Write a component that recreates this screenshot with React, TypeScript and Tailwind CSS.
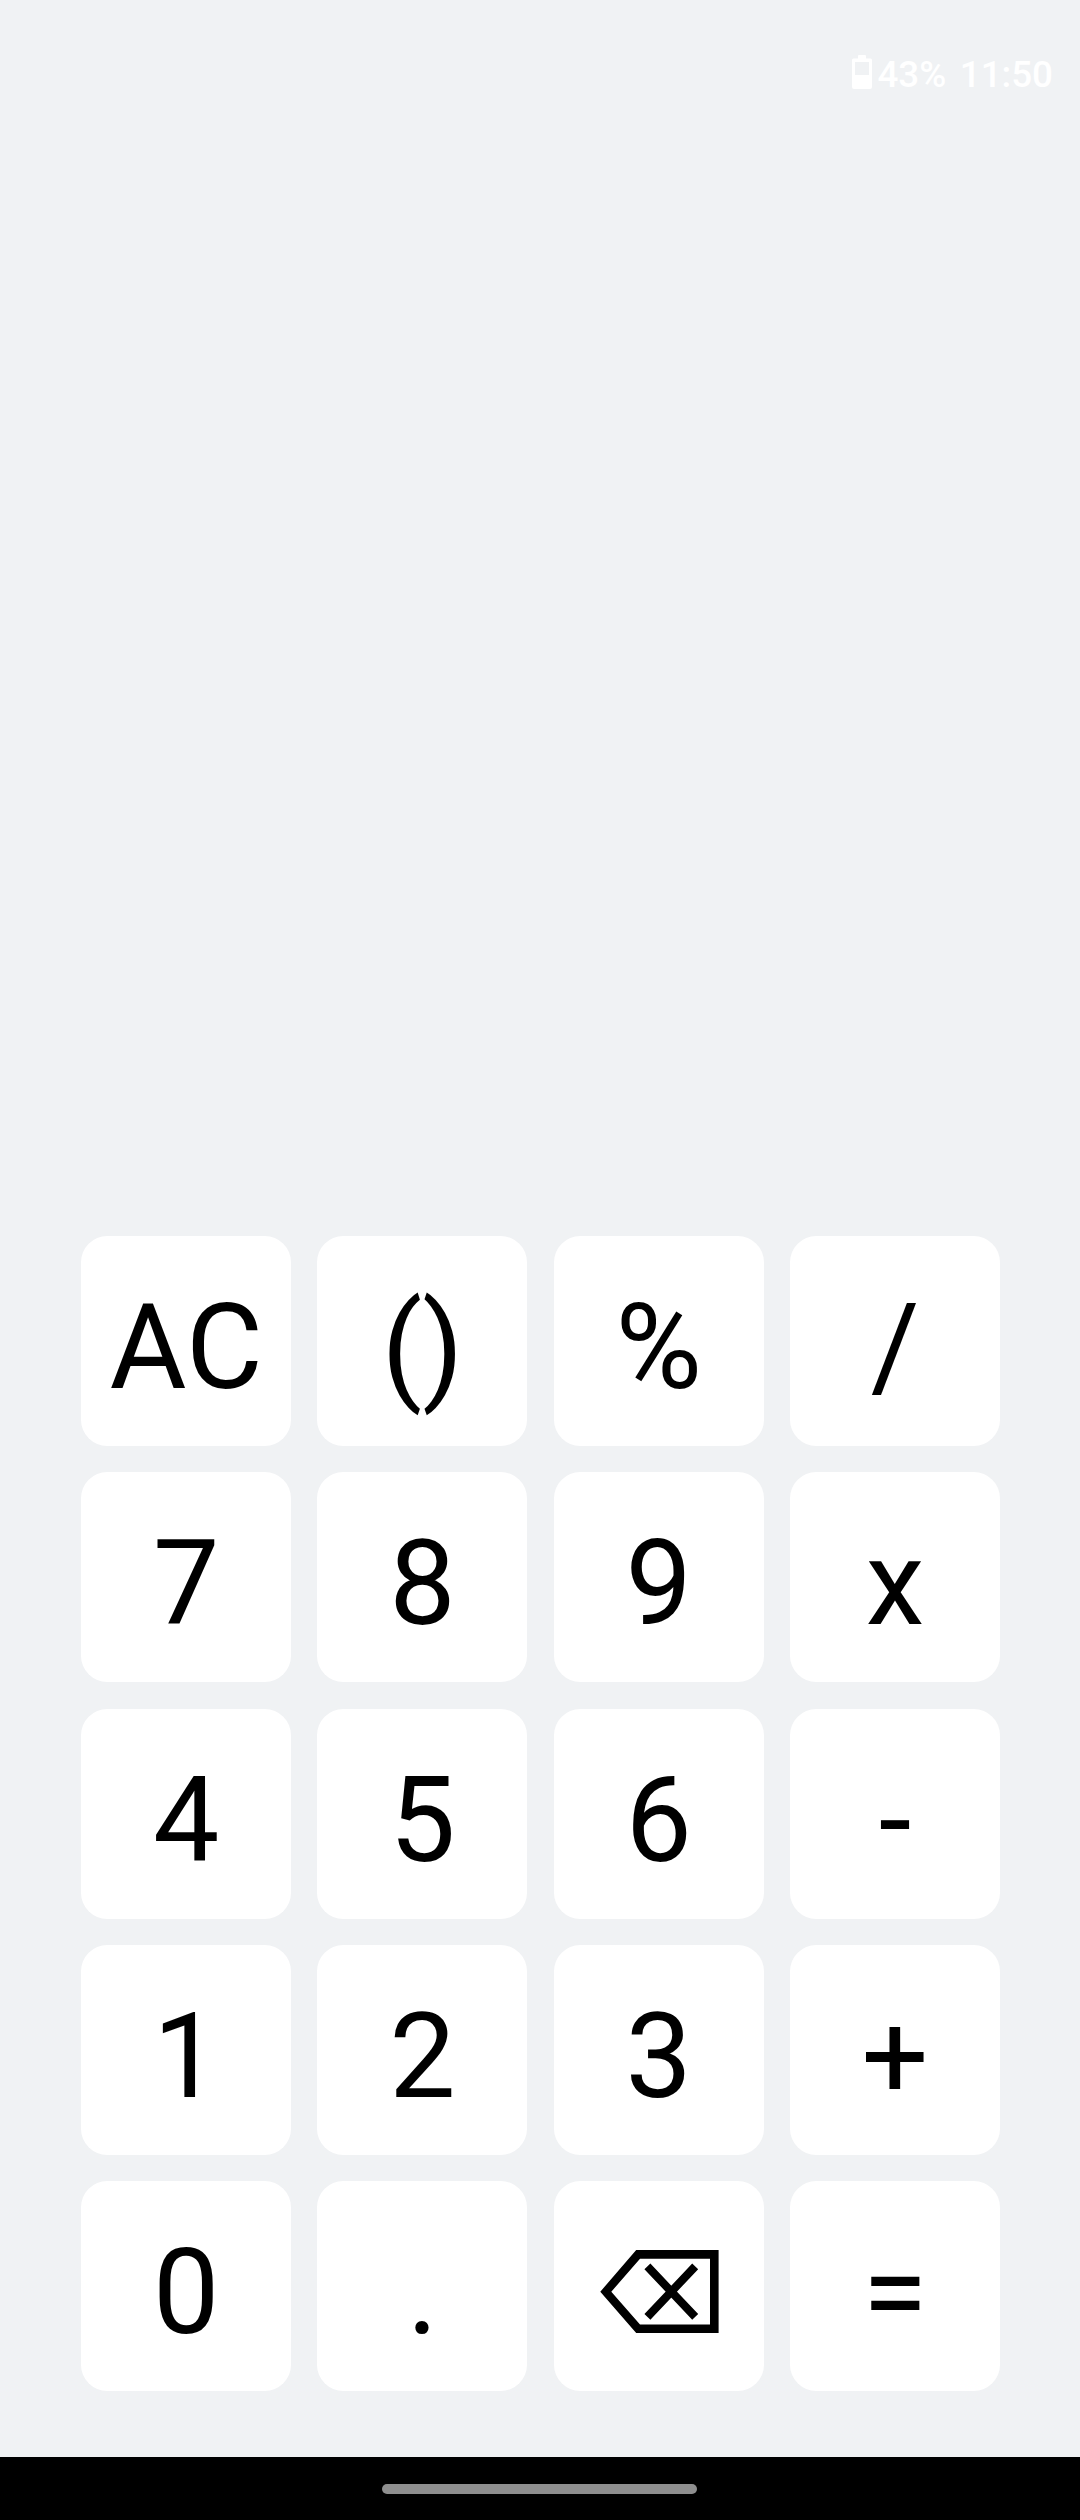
const keys = ['AC', '()', '%', '/', '7', '8', '9', 'x', '4', '5', '6', '-', '1', '2', '3', '+', '0', '.', 'back', '='];

function Backspace() {
  return (
    <svg className="h-[210px] w-[210px]" viewBox="0 0 210 210">
      <path fillRule="evenodd" d="M46.3 110.7L82.2 69H164.6V152H82.2ZM57.3 110.7L86 143.4H156V77.7H86Z" />
      <path fill="none" stroke="#000" strokeWidth="8.2" d="M93.4 85.4L141.2 135.9M141.2 85.4L93.4 135.9" />
    </svg>
  );
}

export default function App() {
  return (
    <div className="flex h-[2520px] w-[1080px] flex-col bg-[#f0f2f4] font-['Roboto',sans-serif] text-black">
      <header className="flex h-[150px] items-center justify-end pr-[27px] text-white">
        <svg className="mr-[5.5px] h-[34px] w-[20px] shrink-0 -translate-y-[3px]" viewBox="0 0 20 34">
          <path fill="#fff" fillRule="evenodd" d="M7 0H13Q14 0 14 1V3.5H18.5Q20 3.5 20 5V32Q20 34 18 34H2Q0 34 0 32V5Q0 3.5 1.5 3.5H6V1Q6 0 7 0ZM3 7V20H17V7Z" />
        </svg>
        <span className="text-[36.75px] font-medium">43%</span>
        <span className="ml-[13.5px] text-[36.75px] font-medium">11:50</span>
      </header>
      <main className="mt-auto grid grid-cols-[repeat(4,210px)] gap-[26.25px] pb-[65.8px] pl-[81px]">
        {keys.map((key) => (
          <button key={key} className="flex h-[210px] w-[210px] items-center justify-center rounded-[26.25px] bg-white text-[118.125px] leading-none">
            {key === 'back' ? <Backspace /> : <span className="pl-[0.5px] pt-[14px]">{key}</span>}
          </button>
        ))}
      </main>
      <footer className="flex h-[63px] justify-center bg-black pt-[27px]">
        <div className="mr-px h-[10px] w-[315px] rounded-full bg-[#8e8e8e]" />
      </footer>
    </div>
  );
}
